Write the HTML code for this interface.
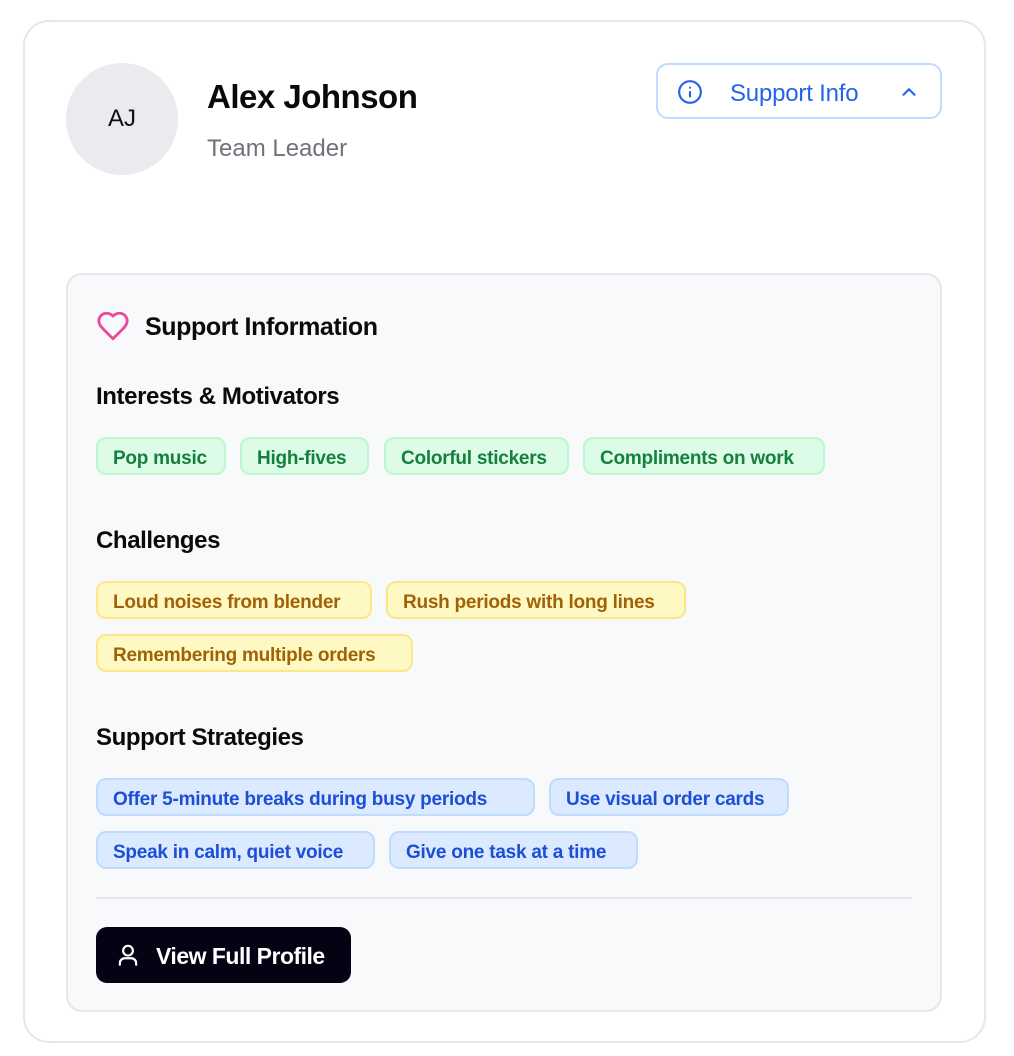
<!DOCTYPE html>
<html><head><meta charset="utf-8"><style>
*{box-sizing:border-box;margin:0;padding:0}
body{width:1014px;height:1056px;background:#fff;font-family:"Liberation Sans",sans-serif;position:relative;overflow:hidden}
.abs{position:absolute}
.card{left:23px;top:20px;width:963px;height:1023px;border:2px solid #e5e7eb;border-radius:26px;background:#fff}
.av{left:66px;top:63px;width:112px;height:112px;border-radius:50%;background:#ebebef;display:flex;align-items:center;justify-content:center;font-size:24px;color:#111}
.name{left:207px;top:78px;font-size:33px;font-weight:bold;color:#0a0a0a;letter-spacing:-0.5px}
.role{left:207px;top:135px;font-size:24px;color:#71717a}
.sbtn{left:656px;top:63px;width:286px;height:56px;border:2px solid #bfdbfe;border-radius:12px;background:#fff}
.sbtn span{position:absolute;left:72px;top:15px;font-size:24px;color:#2563eb;letter-spacing:-0.2px}
.panel{left:66px;top:273px;width:876px;height:739px;border:2px solid #e5e7eb;border-radius:16px;background:#f8f9fb}
.h{font-size:24px;font-weight:bold;color:#0a0a0a;letter-spacing:-0.4px}
.tag{position:absolute;height:38px;border-radius:10px;border:2px solid;font-size:19px;font-weight:bold;padding:9px 0 0 15px;white-space:nowrap;letter-spacing:-0.25px}
.g{background:#dcfce7;border-color:#bbf7d0;color:#15803d}
.y{background:#fef9c3;border-color:#fde68a;color:#a16207}
.b{background:#dbeafe;border-color:#bfdbfe;color:#1d4ed8}
.div{left:96px;top:897px;width:816px;height:2px;background:#e5e7eb}
.vbtn{left:96px;top:927px;width:255px;height:56px;border-radius:11px;background:#030314;color:#fff}
.vbtn span{position:absolute;left:60px;top:16px;font-size:23px;font-weight:bold;letter-spacing:-0.5px}
</style></head><body>
<div class="abs card"></div>
<div class="abs av">AJ</div>
<div class="abs name">Alex Johnson</div>
<div class="abs role">Team Leader</div>
<div class="abs sbtn">
<svg class="abs" style="left:19px;top:14px" width="26" height="26" viewBox="0 0 24 24" fill="none" stroke="#2563eb" stroke-width="2" stroke-linecap="round"><circle cx="12" cy="12" r="10"/><path d="M12 16v-4M12 8h.01"/></svg>
<span>Support Info</span>
<svg class="abs" style="left:240px;top:16px" width="22" height="22" viewBox="0 0 24 24" fill="none" stroke="#2563eb" stroke-width="2.4" stroke-linecap="round" stroke-linejoin="round"><path d="M6 15l6-6 6 6"/></svg>
</div>
<div class="abs panel"></div>
<svg class="abs" style="left:95px;top:309px" width="36" height="34" viewBox="0 0 24 24" fill="none" stroke="#ec4899" stroke-width="2" stroke-linecap="round" stroke-linejoin="round"><path d="M19 14c1.49-1.46 3-3.21 3-5.5A5.5 5.5 0 0 0 16.5 3c-1.76 0-3 .5-4.5 2-1.5-1.5-2.74-2-4.5-2A5.5 5.5 0 0 0 2 8.5c0 2.3 1.5 4.05 3 5.5l7 7Z"/></svg>
<div class="abs h" style="left:145px;top:313px;font-size:25px">Support Information</div>
<div class="abs h" style="left:96px;top:383px">Interests &amp; Motivators</div>
<div class="tag g" style="left:96px;top:437px;width:130px">Pop music</div>
<div class="tag g" style="left:240px;top:437px;width:129px">High-fives</div>
<div class="tag g" style="left:384px;top:437px;width:185px">Colorful stickers</div>
<div class="tag g" style="left:583px;top:437px;width:242px">Compliments on work</div>
<div class="abs h" style="left:96px;top:527px">Challenges</div>
<div class="tag y" style="left:96px;top:581px;width:276px">Loud noises from blender</div>
<div class="tag y" style="left:386px;top:581px;width:300px">Rush periods with long lines</div>
<div class="tag y" style="left:96px;top:634px;width:317px">Remembering multiple orders</div>
<div class="abs h" style="left:96px;top:724px">Support Strategies</div>
<div class="tag b" style="left:96px;top:778px;width:439px">Offer 5-minute breaks during busy periods</div>
<div class="tag b" style="left:549px;top:778px;width:240px">Use visual order cards</div>
<div class="tag b" style="left:96px;top:831px;width:279px">Speak in calm, quiet voice</div>
<div class="tag b" style="left:389px;top:831px;width:249px">Give one task at a time</div>
<div class="abs div"></div>
<div class="abs vbtn">
<svg class="abs" style="left:19px;top:15px" width="26" height="26" viewBox="0 0 24 24" fill="none" stroke="#fff" stroke-width="2" stroke-linecap="round"><circle cx="12" cy="8" r="4.5"/><path d="M4.5 21v-1.5A4.5 4.5 0 0 1 9 15h6a4.5 4.5 0 0 1 4.5 4.5V21"/></svg>
<span>View Full Profile</span>
</div>
</body></html>
